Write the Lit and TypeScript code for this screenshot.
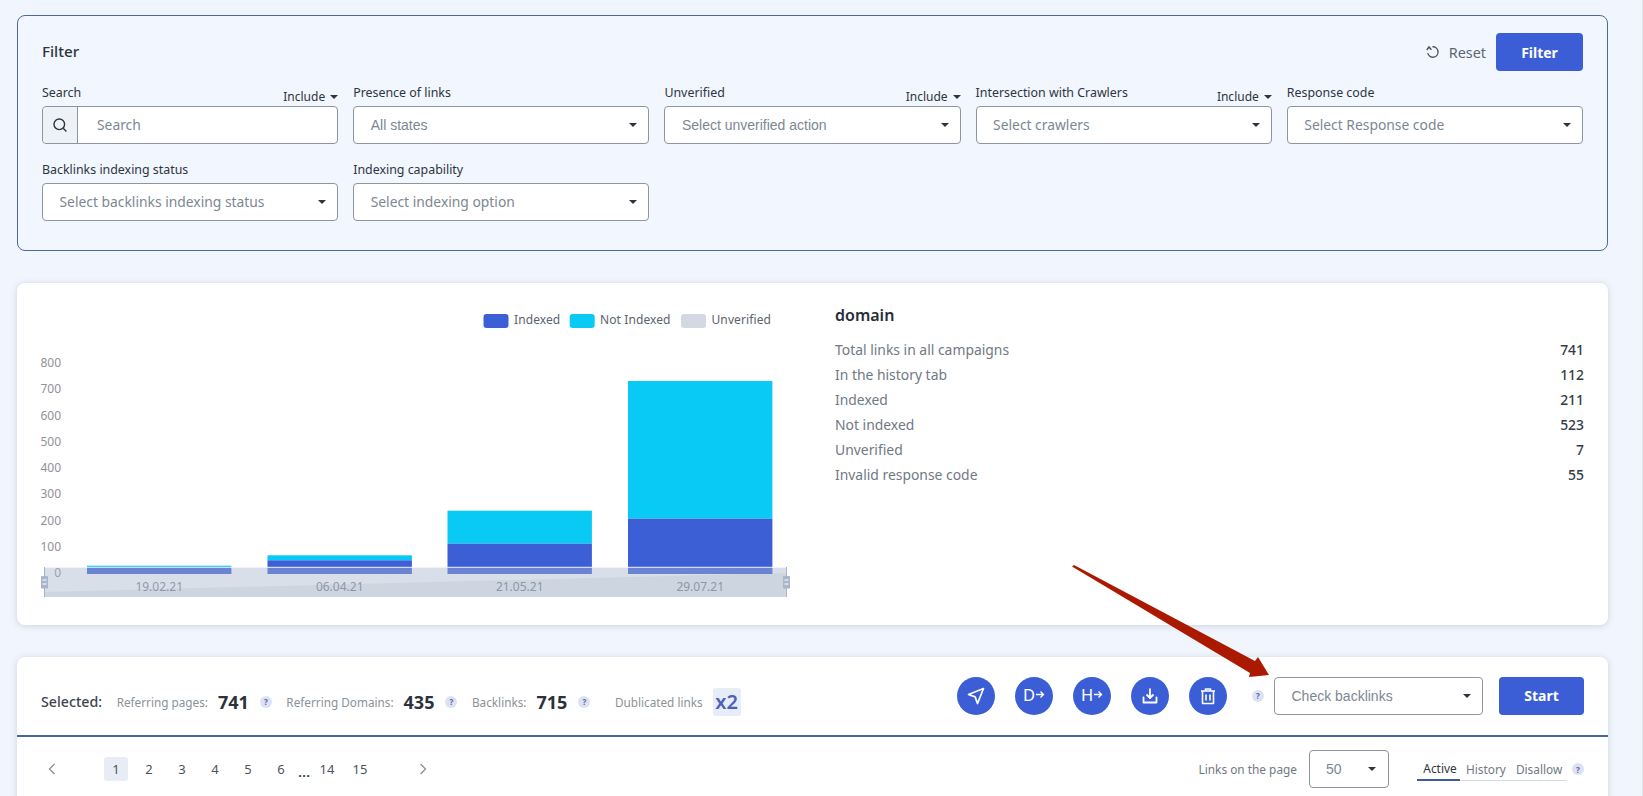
import { LitElement, html, css, svg } from "lit";
import { customElement } from "lit/decorators.js";

const caret = html`<i class="caret"></i>`;
const help = html`<span class="help">?</span>`;

const fieldsRow1 = [
  { label: "Presence of links", ph: "All states", arial: true },
  { label: "Unverified", ph: "Select unverified action", arial: true, include: true },
  { label: "Intersection with Crawlers", ph: "Select crawlers", include: true },
  { label: "Response code", ph: "Select Response code" },
];
const fieldsRow2 = [
  { label: "Backlinks indexing status", ph: "Select backlinks indexing status" },
  { label: "Indexing capability", ph: "Select indexing option" },
];
const stats = [
  ["Total links in all campaigns", "741"],
  ["In the history tab", "112"],
  ["Indexed", "211"],
  ["Not indexed", "523"],
  ["Unverified", "7"],
  ["Invalid response code", "55"],
];
const bars = [
  { x: 87, top: 565.7, split: 567, label: "19.02.21" },
  { x: 267.5, top: 555.3, split: 560.3, label: "06.04.21" },
  { x: 447.5, top: 510.7, split: 543.7, label: "21.05.21" },
  { x: 628, top: 381, split: 518.7, label: "29.07.21" },
];
const yTicks = [800, 700, 600, 500, 400, 300, 200, 100, 0];

@customElement("app-root")
export class AppRoot extends LitElement {
  static styles = css`
    :host {
      display: block;
      position: relative;
      box-sizing: border-box;
      height: 796px;
      overflow: hidden;
      padding: 15px 34px 0 17px;
      background: #f1f5fd;
      border-right: 1px solid #dfe3ea;
      font-family: "Noto Sans", sans-serif;
      color: #2d3540;
    }
    * { box-sizing: border-box; }
    .filter {
      height: 236px;
      border: 1px solid #4d6a9f;
      border-radius: 8px;
      background: #f2f6fe;
      padding: 17px 24px 0 24px;
      margin-bottom: 32px;
    }
    .filter-head { display: flex; align-items: center; height: 38px; }
    .filter-head h2 { margin: -2px 0 0; font-size: 15.2px; font-weight: 500; color: #2d3540; }
    .reset { margin-left: auto; display: flex; align-items: center; gap: 9px; font-size: 14.4px; color: #5d6670; margin-right: 10px; }
    .btn {
      display: flex; align-items: center; justify-content: center;
      height: 38px; border-radius: 4px; background: #3b5ed6; color: #fff;
      font-size: 14px; font-weight: 700;
    }
    .btn.filter-btn { width: 87px; }
    .grid { display: grid; grid-template-columns: repeat(5, 1fr); column-gap: 15px; row-gap: 18px; margin-top: 14px; }
    .field-top { display: flex; justify-content: space-between; height: 21px; font-size: 12.4px; color: #2d3540; line-height: 16px; }
    .include { display: flex; align-items: center; gap: 5px; height: 17px; margin-top: 3px; font-size: 12px; }
    .select {
      display: flex; align-items: center; height: 38px; background: #fff;
      border: 1px solid #8d95a1; border-radius: 4px; padding: 0 11px 0 16.5px;
      font-size: 13.85px; color: #7d8791; line-height: 34px;
    }
    .select.arial { font-family: "Liberation Sans", sans-serif; font-size: 14px; }
    .select .caret { margin-left: auto; }
    .search { padding: 0; }
    .addon { width: 35px; height: 100%; display: flex; align-items: center; justify-content: center; background: #eef1f6; border-right: 1px solid #8d95a1; border-radius: 4px 0 0 4px; flex: none; }
    .search-ph { margin-left: 19px; }
    .caret { display: inline-block; width: 0; height: 0; border-left: 4.5px solid transparent; border-right: 4.5px solid transparent; border-top: 4.5px solid #2d3540; flex: none; }
    .include .caret { border-left-width: 4.5px; border-right-width: 4.5px; border-top-width: 4px; }

    .card { background: #fff; border-radius: 8px; box-shadow: 0 1px 6px rgba(90, 110, 150, 0.25); }
    .chart-card { display: flex; height: 342px; margin-bottom: 32px; }
    .chart { width: 800px; height: 342px; flex: none; display: block; }
    .domain { margin-left: 18px; flex: 1; padding: 21px 24px 0 0; }
    .domain h3 { margin: 0 0 11px; font-size: 16px; line-height: 22px; font-weight: 600; color: #262e38; }
    .stat { display: flex; justify-content: space-between; height: 25px; line-height: 25px; font-size: 13.9px; color: #717984; }
    .stat b { font-weight: 500; color: #343c47; }

    .bottom { height: 200px; }
    .sel-row { display: flex; align-items: center; height: 80px; padding: 20px 24px 21px; border-bottom: 2px solid #4a62a8; }
    .sel-left { display: flex; align-items: center; margin-top: 12px; font-size: 11.75px; color: #8b929a; }
    .sel-left .title { font-size: 14.2px; font-weight: 500; color: #3f4650; margin-right: 14.5px; }
    .num { font-size: 18px; font-weight: 700; color: #2a323d; margin: 0 10px; line-height: 24px; }
    .help { display: inline-flex; align-items: center; justify-content: center; width: 12px; height: 12px; border-radius: 50%; background: #dde2f3; color: #5566aa; font-size: 8px; font-weight: 700; flex: none; }
    .sel-left .help { margin: 0 14.5px 0 1px; }
    .x2 { display: flex; align-items: center; justify-content: center; width: 28px; height: 28px; margin-left: 10px; background: #e6ecf8; color: #4a62b8; font-size: 20px; font-weight: 600; border-radius: 3px; }
    .dub { margin-left: 10px; }
    .actions { margin-left: auto; display: flex; align-items: center; gap: 20px; }
    .circle { width: 38px; height: 38px; border-radius: 50%; background: #3b5ed6; color: #fff; display: flex; align-items: center; justify-content: center; flex: none; font-size: 16.5px; line-height: 1; gap: 1px; }
    .circle .up { margin-top: -2px; }
    .act-help { margin-left: 25px; }
    .check { width: 209px; margin-left: 10px; }
    .start { width: 85px; margin-left: 16px; }

    .pager-row { display: flex; align-items: center; height: 64px; padding: 0 24px 0 31px; font-size: 13px; color: #4a525c; }
    .pages { display: flex; align-items: center; margin-left: 48px; gap: 9px; }
    .page { width: 24px; height: 24px; display: flex; align-items: center; justify-content: center; border-radius: 3px; }
    .page.on { background: #e8edf5; }
    .dots { width: 22px; margin: 3px -9px 0; text-align: center; font-size: 15px; font-weight: 500; color: #2d3540; }
    .chev { display: block; flex: none; }
    .next { margin-left: 47px; }
    .pg-right { margin-left: auto; display: flex; align-items: center; font-size: 11.85px; color: #717984; }
    .perpage { width: 80px; margin-left: 12px; padding: 0 12px 0 16px; }
    .tabs { display: flex; margin-left: 28px; height: 24px; align-items: center; border-bottom: 1px solid #d5d9e0; width: 150px; flex: none; }
    .tab { padding: 0 5px; flex: none; }
    .tab.on { color: #2d3540; border-bottom: 2px solid #3f5a9e; height: 24px; line-height: 23px; margin-bottom: -1px; width: 43px; text-align: center; padding: 0 0 0 3px; margin-right: 1px; }
    .tabs + .help { margin-left: 5px; }
    .arrow { position: absolute; left: 0; top: 0; width: 1643px; height: 796px; pointer-events: none; }
  `;

  private field(f: any) {
    return html`<div>
      <div class="field-top"><span>${f.label}</span>${f.include ? html`<span class="include">Include ${caret}</span>` : ""}</div>
      <div class="select ${f.arial ? "arial" : ""}"><span>${f.ph}</span>${caret}</div>
    </div>`;
  }

  private chart() {
    return html`<svg class="chart" viewBox="17 283 800 342" font-family="'Noto Sans', sans-serif" font-size="12">
      ${[["#3d5fd6", 483.5, "Indexed", 514], ["#08caf5", 569.7, "Not Indexed", 600], ["#d3d8e2", 681, "Unverified", 711.5]].map(
        ([c, x, t, tx]) => svg`<rect x=${x} y="314" width="25" height="14" rx="3" fill=${c}></rect>
          <text x=${tx} y="324" fill="#5b636d" letter-spacing="0.1">${t}</text>`
      )}
      ${yTicks.map((v, i) => svg`<text x="61" y=${367 + i * 26.25} text-anchor="end" fill="#8f9296">${v}</text>`)}
      ${bars.map(
        (b) => svg`<rect x=${b.x} y=${b.top} width="144.4" height=${b.split - b.top} fill="#08caf5"></rect>
          <rect x=${b.x} y=${b.split} width="144.4" height=${574 - b.split} fill="#3d5fd6"></rect>
          <text x=${b.x + 72.2} y="591" text-anchor="middle" fill="#7f858c">${b.label}</text>`
      )}
      <rect x="44" y="567.5" width="742.5" height="29.5" fill="rgba(166,180,203,0.43)"></rect>
      <polygon points="44,592 786.5,573 786.5,597 44,597" fill="rgba(110,130,160,0.1)"></polygon>
      <line x1="44" y1="567.3" x2="786" y2="567.3" stroke="#f4f6fb" stroke-width="1"></line>
      <line x1="44.5" y1="567" x2="44.5" y2="597" stroke="#a9b3c3"></line>
      <line x1="786.5" y1="567" x2="786.5" y2="597" stroke="#a9b3c3"></line>
      ${[41, 783].map(
        (x) => svg`<rect x=${x} y="576" width="7" height="12.5" rx="1" fill="#a8b6cc"></rect>
          <line x1=${x + 1.5} y1="580" x2=${x + 5.5} y2="580" stroke="#fff"></line>
          <line x1=${x + 1.5} y1="584" x2=${x + 5.5} y2="584" stroke="#fff"></line>`
      )}
    </svg>`;
  }

  render() {
    return html`
      <section class="filter">
        <div class="filter-head">
          <h2>Filter</h2>
          <span class="reset">
            <svg width="14" height="14" viewBox="0 0 14 14" fill="none" stroke="#4a525c" stroke-width="1.4"><path d="M6.5 1.8a5.2 5.2 0 1 1-4.7 6.4" /><path d="M.8 5 3 2l2.4 2.8" /></svg>
            Reset
          </span>
          <span class="btn filter-btn">Filter</span>
        </div>
        <div class="grid">
          <div>
            <div class="field-top"><span>Search</span><span class="include">Include ${caret}</span></div>
            <div class="select search">
              <span class="addon"><svg width="16" height="16" viewBox="0 0 16 16" fill="none" stroke="#2d3540" stroke-width="1.4"><circle cx="7.3" cy="7.3" r="5.3" /><path d="m11.2 11.2 3.2 3.2" /></svg></span>
              <span class="search-ph">Search</span>
            </div>
          </div>
          ${fieldsRow1.map((f) => this.field(f))}
          ${fieldsRow2.map((f) => this.field(f))}
        </div>
      </section>

      <section class="card chart-card">
        ${this.chart()}
        <div class="domain">
          <h3>domain</h3>
          ${stats.map(([k, v]) => html`<div class="stat"><span>${k}</span><b>${v}</b></div>`)}
        </div>
      </section>

      <section class="card bottom">
        <div class="sel-row">
          <div class="sel-left">
            <span class="title">Selected:</span>
            <span>Referring pages:</span><span class="num">741</span>${help}
            <span>Referring Domains:</span><span class="num">435</span>${help}
            <span>Backlinks:</span><span class="num">715</span>${help}
            <span class="dub">Dublicated links</span><span class="x2">x2</span>
          </div>
          <div class="actions">
            <span class="circle"><svg width="20" height="20" viewBox="0 0 20 20" fill="none" stroke="#fff" stroke-width="1.7" stroke-linejoin="round"><path d="M17.5 2.5 2.5 8.5l6.6 2.4 2.4 6.6z" /></svg></span>
            <span class="circle">D<svg class="up" width="9" height="9" viewBox="0 0 9 9" fill="none" stroke="#fff" stroke-width="1.3"><path d="M0 4.5h7.5M4.5 1.5l3 3-3 3" /></svg></span>
            <span class="circle">H<svg class="up" width="9" height="9" viewBox="0 0 9 9" fill="none" stroke="#fff" stroke-width="1.3"><path d="M0 4.5h7.5M4.5 1.5l3 3-3 3" /></svg></span>
            <span class="circle"><svg width="18" height="18" viewBox="0 0 18 18" fill="none" stroke="#fff" stroke-width="1.8" stroke-linejoin="round"><path d="M9 1.5v9M5.5 7.5 9 11l3.5-3.5" /><path d="M2.5 10.5v5h13v-5" stroke-linecap="round" /></svg></span>
            <span class="circle"><svg width="18" height="18" viewBox="0 0 18 18" fill="none" stroke="#fff" stroke-width="1.6" stroke-linejoin="round"><path d="M2 4h14M6.5 4V2h5v2M3.5 4.5v12h11v-12M7 7.5v6M11 7.5v6" /></svg></span>
          </div>
          <span class="help act-help">?</span>
          <div class="select arial check"><span>Check backlinks</span>${caret}</div>
          <span class="btn start">Start</span>
        </div>
        <div class="pager-row">
          <svg class="chev" width="8" height="12" viewBox="0 0 8 12" fill="none" stroke="#8a9097" stroke-width="1.3"><path d="M6.5 1 1.5 6l5 5" /></svg>
          <div class="pages">
            <span class="page on">1</span><span class="page">2</span><span class="page">3</span><span class="page">4</span><span class="page">5</span><span class="page">6</span>
            <span class="dots">...</span><span class="page">14</span><span class="page">15</span>
          </div>
          <svg class="chev next" width="8" height="12" viewBox="0 0 8 12" fill="none" stroke="#8a9097" stroke-width="1.3"><path d="M1.5 1l5 5-5 5" /></svg>
          <div class="pg-right">
            <span>Links on the page</span>
            <div class="select arial perpage"><span>50</span>${caret}</div>
            <div class="tabs"><span class="tab on">Active</span><span class="tab">History</span><span class="tab">Disallow</span></div>
            ${help}
          </div>
        </div>
      </section>

      <svg class="arrow" viewBox="0 0 1643 796"><polygon points="1074,565 1255,661 1258,657 1269,675 1249,677 1250,673 1072,566.5" fill="#ab1a00"></polygon></svg>
    `;
  }
}
